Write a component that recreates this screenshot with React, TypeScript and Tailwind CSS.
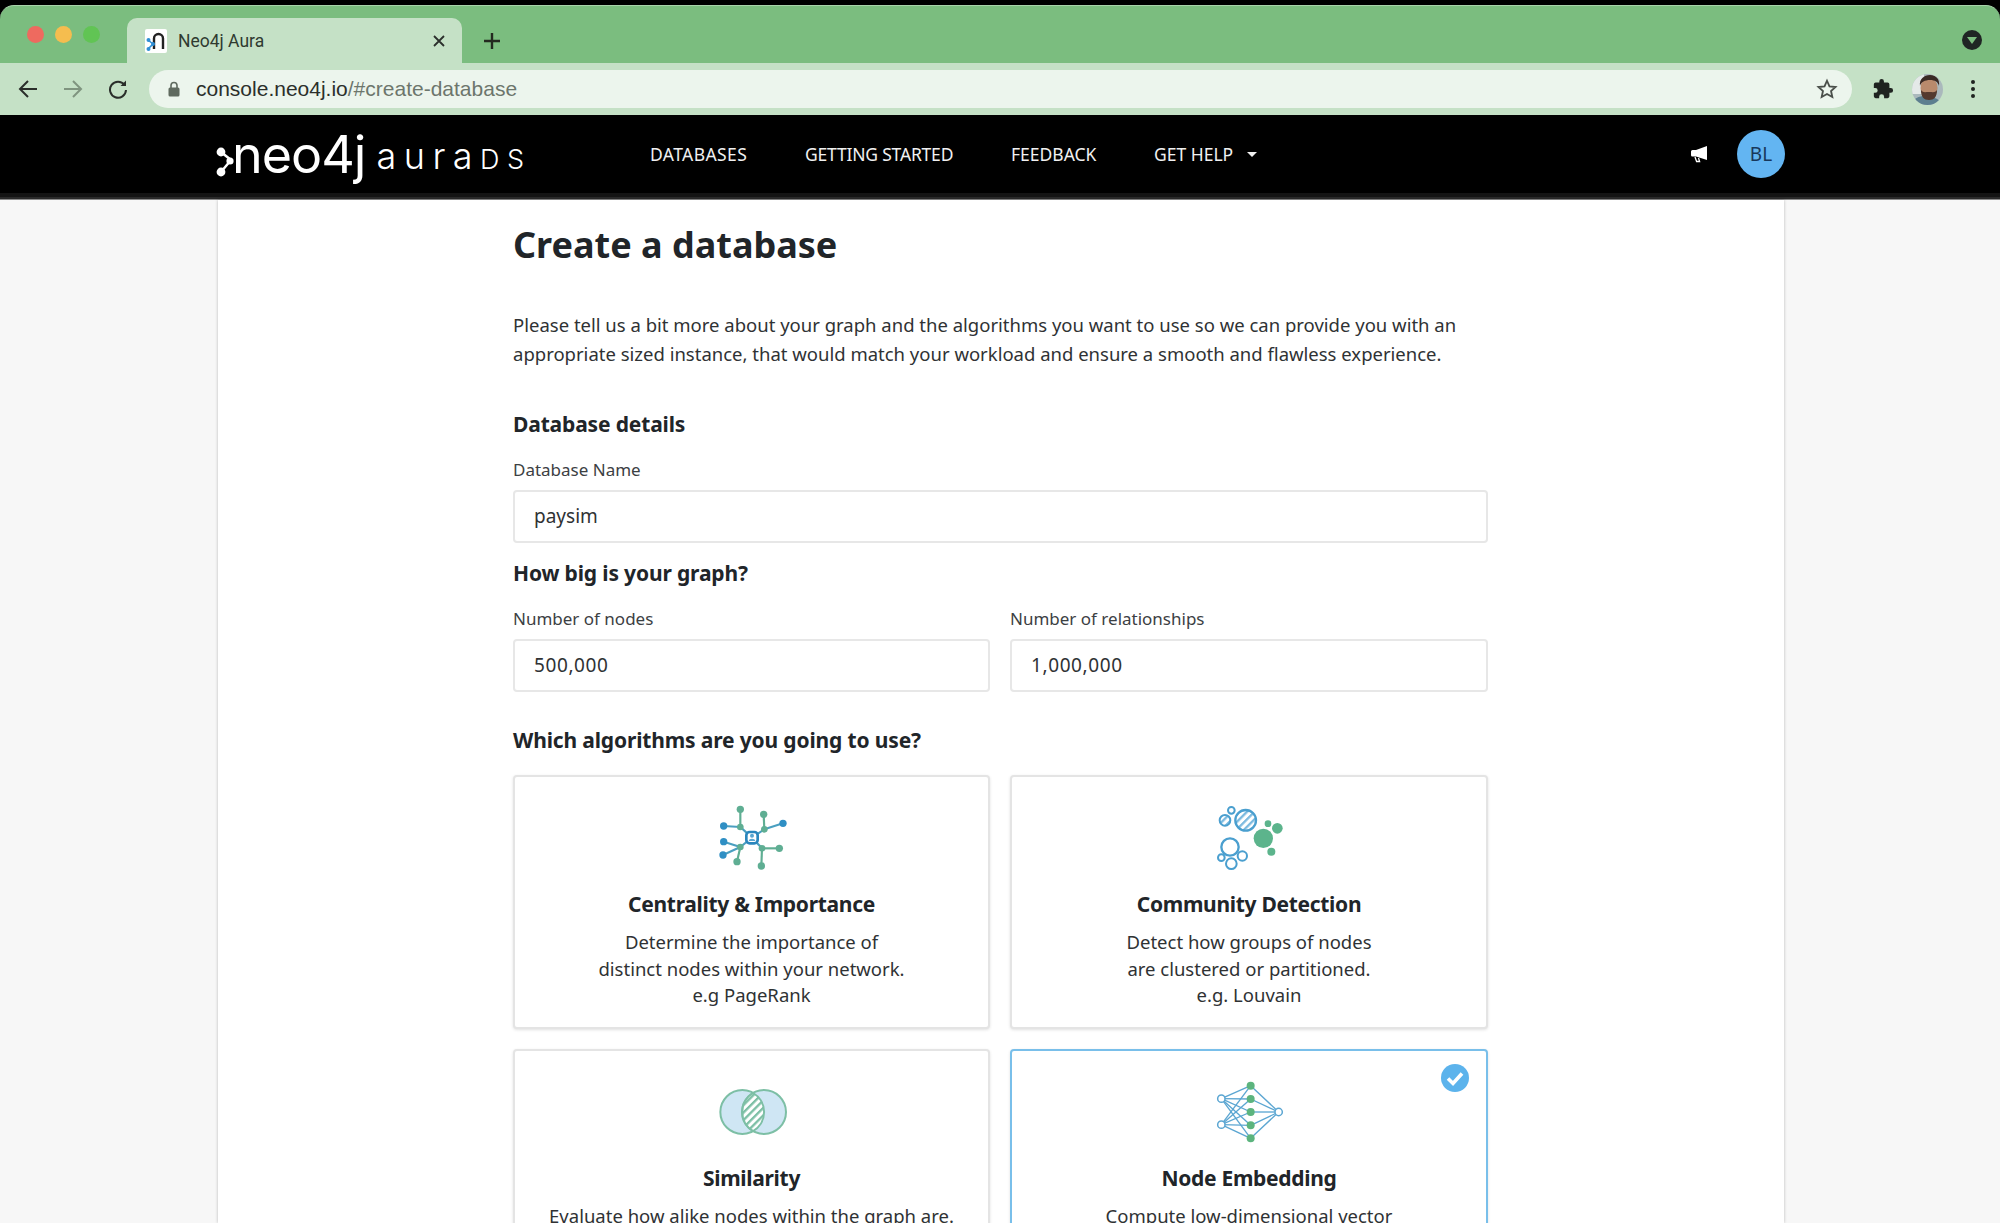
import React from "react";

const sans = "font-['Noto_Sans',sans-serif]";

function Hatch({ id, color, bg = "none" }: { id: string; color: string; bg?: string }) {
  return (
    <pattern id={id} width="16" height="16" patternUnits="userSpaceOnUse" patternTransform="rotate(-45)">
      <rect width="16" height="16" fill={bg} />
      <rect width="16" height="7" fill={color} />
    </pattern>
  );
}

function CentralityIcon() {
  const blue = "#2f8fc4", green = "#5fae93";
  const links: [number, number, number, number, string][] = [
    [185, 140, 150, 108, "#4a9fc0"], [150, 108, 150, 55, green], [150, 108, 100, 105, "#4a9fc0"],
    [185, 140, 222, 115, "#4a9fc0"], [222, 115, 220, 70, green], [222, 115, 278, 97, "#4a9fc0"],
    [185, 140, 150, 168, "#4a9fc0"], [150, 168, 100, 152, "#4a9fc0"], [150, 168, 98, 192, "#4a9fc0"], [150, 168, 140, 212, green],
    [185, 140, 215, 172, "#4a9fc0"], [215, 172, 267, 172, green], [215, 172, 213, 225, green],
  ];
  const nodes: [number, number, number, string][] = [
    [150, 108, 10, green], [222, 115, 10, green], [150, 168, 10, green], [215, 172, 10, green],
    [150, 55, 11, green], [220, 70, 11, green], [140, 212, 11, green], [267, 172, 11, green], [213, 225, 11, green],
    [100, 105, 11, blue], [278, 97, 11, blue], [100, 152, 11, blue], [98, 192, 11, blue],
  ];
  return (
    <svg width="130" height="90" viewBox="-10 6 390 270">
      {links.map(([a, b, c, d, s], i) => <line key={i} x1={a} y1={b} x2={c} y2={d} stroke={s} strokeWidth="6.5" />)}
      {nodes.map(([x, y, r, f], i) => <circle key={i} cx={x} cy={y} r={r} fill={f} />)}
      <rect x="168" y="123" width="34" height="34" rx="10" fill="#fff" stroke="#2a86bd" strokeWidth="8" />
      <circle cx="185" cy="134" r="6" fill="#5aa6d0" />
      <path d="M175 150c1-9 19-9 20 0z" fill="#5aa6d0" />
    </svg>
  );
}

function CommunityIcon() {
  const blue = "#4a9fcf", green = "#5cb48c";
  return (
    <svg width="130" height="90" viewBox="-20 6 390 270">
      <defs><Hatch id="h-comm" color="#7cbadf" /></defs>
      <circle cx="165" cy="88" r="31" fill="url(#h-comm)" stroke={blue} strokeWidth="7" />
      <circle cx="103" cy="88" r="16" fill="url(#h-comm)" stroke={blue} strokeWidth="6" />
      <circle cx="122" cy="58" r="10" fill="#fff" stroke={blue} strokeWidth="6" />
      <circle cx="118" cy="168" r="26" fill="#fff" stroke={blue} strokeWidth="7" />
      <circle cx="92" cy="200" r="10" fill="#fff" stroke={blue} strokeWidth="6" />
      <circle cx="155" cy="195" r="14" fill="#fff" stroke={blue} strokeWidth="6" />
      <circle cx="122" cy="218" r="16" fill="#fff" stroke={blue} strokeWidth="6" />
      <circle cx="218" cy="142" r="29" fill={green} />
      <circle cx="260" cy="112" r="16" fill={green} />
      <circle cx="232" cy="98" r="10" fill={green} />
      <circle cx="242" cy="182" r="12" fill={green} />
    </svg>
  );
}

function SimilarityIcon() {
  const stroke = "#7dbfa5";
  const lens = "M188.5 81A66 66 0 0 1 188.5 195A66 66 0 0 1 188.5 81Z";
  return (
    <svg width="130" height="90" viewBox="-10 3 390 270">
      <defs><Hatch id="h-sim" color="#7dbfa5" bg="#ffffff" /></defs>
      <circle cx="156" cy="138" r="66" fill="#cfe6f4" stroke={stroke} strokeWidth="6" />
      <circle cx="221" cy="138" r="66" fill="#cfe6f4" stroke={stroke} strokeWidth="6" />
      <path d={lens} fill="url(#h-sim)" stroke={stroke} strokeWidth="6" />
    </svg>
  );
}

function EmbeddingIcon() {
  const left: [number, number][] = [[92, 172], [92, 250]];
  const mid: [number, number][] = [[180, 133], [180, 173], [180, 212], [180, 252], [180, 291]];
  const right: [number, number] = [264, 212];
  return (
    <svg width="130" height="90" viewBox="-20 77 390 270">
      {left.flatMap((l, i) => mid.map((m, j) => (
        <line key={`${i}-${j}`} x1={l[0]} y1={l[1]} x2={m[0]} y2={m[1]} stroke="#5ba6d2" strokeWidth="4" />
      )))}
      {mid.map((m, j) => <line key={j} x1={m[0]} y1={m[1]} x2={right[0]} y2={right[1]} stroke="#5ba6d2" strokeWidth="4" />)}
      {mid.map((m, j) => <circle key={j} cx={m[0]} cy={m[1]} r="12" fill="#5cb47e" />)}
      {left.map((l, i) => <circle key={i} cx={l[0]} cy={l[1]} r="11" fill="#fff" stroke="#5ba6d2" strokeWidth="4.5" />)}
      <circle cx={right[0]} cy={right[1]} r="11" fill="#fff" stroke="#5ba6d2" strokeWidth="4.5" />
    </svg>
  );
}

function TrafficLights() {
  return (
    <div className="flex gap-[11px] pl-[27px] pt-[20px] w-[127px] shrink-0">
      <span className="w-[17px] h-[17px] rounded-full bg-[#ee6a5f]" />
      <span className="w-[17px] h-[17px] rounded-full bg-[#f5bd4f]" />
      <span className="w-[17px] h-[17px] rounded-full bg-[#61c454]" />
    </div>
  );
}

function Favicon() {
  return (
    <svg width="22" height="24" viewBox="0 0 22 24" className="shrink-0 bg-white rounded-[2px]">
      <path d="M9 20V9.5a4.5 4.5 0 0 1 9 0V20" fill="none" stroke="#222" strokeWidth="2.4" />
      <path d="M3 11l5 4-5 5" fill="none" stroke="#2f8fd6" strokeWidth="1.6" />
      <circle cx="3.5" cy="11" r="2" fill="#2f8fd6" />
      <circle cx="3.5" cy="20" r="2" fill="#2f8fd6" />
      <circle cx="8" cy="15" r="2" fill="#2f8fd6" />
    </svg>
  );
}

function Tab() {
  return (
    <div className="w-[335px] h-[46px] mt-[12px] shrink-0 bg-[#c5e1c6] rounded-t-[10px] flex items-center pl-[18px] pr-[16px]">
      <Favicon />
      <span className="ml-[11px] text-[17.5px] text-[#2f3a30] font-['Roboto',sans-serif]">Neo4j Aura</span>
      <svg width="14" height="14" viewBox="0 0 14 14" className="ml-auto" fill="none" stroke="#2c2f2c" strokeWidth="1.8">
        <path d="M2 2l10 10M12 2L2 12" />
      </svg>
    </div>
  );
}

function Toolbar() {
  return (
    <div className="h-[52px] bg-[#c5e1c6] flex items-center">
      <div className="w-[149px] shrink-0 flex items-center pl-[18px] gap-[25px]">
        <svg width="20" height="20" viewBox="0 0 20 20" fill="none" stroke="#2a2e2a" strokeWidth="2"><path d="M19 10H2M10 2l-8 8 8 8" /></svg>
        <svg width="20" height="20" viewBox="0 0 20 20" fill="none" stroke="#7f947f" strokeWidth="2"><path d="M1 10h17M10 2l8 8-8 8" /></svg>
        <svg width="20" height="20" viewBox="0 0 20 20" fill="none" stroke="#2a2e2a" strokeWidth="2"><path d="M16.5 6A8 8 0 1 0 18 11" /><path d="M18 1.5V7h-5.5z" fill="#2a2e2a" stroke="none" /></svg>
      </div>
      <div className="w-[1703px] h-[38px] shrink-0 rounded-full bg-[#ecf5ed] flex items-center pl-[19px] pr-[14px]">
        <svg width="12" height="16" viewBox="0 0 12 16" className="shrink-0">
          <path d="M3 7V4.5a3 3 0 0 1 6 0V7" fill="none" stroke="#5f6a5f" strokeWidth="1.6" />
          <rect x="0.5" y="6.5" width="11" height="9" rx="1.5" fill="#5f6a5f" />
        </svg>
        <span className="ml-[16px] text-[21px] text-[#2b2f2b] font-['Liberation_Sans',sans-serif]">
          console.neo4j.io<span className="text-[#6c766c]">/#create-database</span>
        </span>
        <svg width="22" height="22" viewBox="0 0 24 24" className="ml-auto" fill="none" stroke="#4a4f4a" strokeWidth="2" strokeLinejoin="miter">
          <path d="M12 3l2.7 6.1 6.6.7-4.9 4.4 1.4 6.5L12 17.4l-5.8 3.3 1.4-6.5-4.9-4.4 6.6-.7z" />
        </svg>
      </div>
      <svg width="22" height="22" viewBox="0 0 24 24" fill="#1f2320" className="ml-[20px] shrink-0">
        <path d="M20.5 11H19V7a2 2 0 0 0-2-2h-4V3.5a2.5 2.5 0 0 0-5 0V5H4a2 2 0 0 0-2 2v3.8h1.5a2.7 2.7 0 0 1 0 5.4H2V20a2 2 0 0 0 2 2h3.8v-1.5a2.7 2.7 0 0 1 5.4 0V22H17a2 2 0 0 0 2-2v-4h1.5a2.5 2.5 0 0 0 0-5z" />
      </svg>
      <svg width="31" height="31" viewBox="0 0 31 31" className="ml-[18px] shrink-0">
        <defs><clipPath id="av"><circle cx="15.5" cy="15.5" r="15.5" /></clipPath></defs>
        <g clipPath="url(#av)">
          <rect width="31" height="31" fill="#aab8bc" />
          <rect x="0" y="0" width="12" height="20" fill="#e4e9e8" />
          <path d="M0 31c1-7 7-9 13-9s14 2 18 9z" fill="#5d7f8f" />
          <ellipse cx="17" cy="14" rx="8.5" ry="10.5" fill="#b98a6c" />
          <path d="M8 12c-1-7 4-11 10-11s10 4 9 11c-1-4-4-6-9-6s-9 2-10 6z" fill="#3a2a24" />
          <path d="M9 16c2 3 4 2 8 2s6 1 8-2c0 7-3 10-8 10s-8-3-8-10z" fill="#54392e" />
        </g>
      </svg>
      <div className="ml-[28px] flex flex-col gap-[3px] shrink-0">
        <span className="w-[4px] h-[4px] rounded-full bg-[#1f2320]" />
        <span className="w-[4px] h-[4px] rounded-full bg-[#1f2320]" />
        <span className="w-[4px] h-[4px] rounded-full bg-[#1f2320]" />
      </div>
    </div>
  );
}

function Logo() {
  return (
    <div className="w-[434px] shrink-0 flex items-center text-white relative h-[60px]">
      <svg width="18" height="32" viewBox="0 0 18 32" className="mt-[18px] shrink-0">
        <path d="M5 5l10 8-10 12" fill="none" stroke="#fff" strokeWidth="2.5" />
        <circle cx="5" cy="5" r="4.4" fill="#fff" />
        <circle cx="5" cy="25" r="4.4" fill="#fff" />
        <circle cx="14" cy="14" r="3.6" fill="#fff" />
      </svg>
      <span className="font-['Inter',sans-serif] text-[52px] leading-none tracking-[-1px] -ml-[2px] mt-[1px]">neo4j</span>
      <span className="font-['Inter',sans-serif] font-light text-[36px] leading-none tracking-[7.5px] ml-[11px] mt-[4px]">
        aura<span className="text-[27px]">DS</span>
      </span>
    </div>
  );
}

function NavBar() {
  return (
    <div className="h-[85px] bg-black flex flex-col">
      <div className="h-[78px] flex items-center pl-[216px] pr-[215px]">
        <Logo />
        <nav className={`flex items-center text-[17.5px] text-[#f0f0f0] ${sans}`}>
          <span className="w-[155px] tracking-[0.4px]">DATABASES</span>
          <span className="w-[206px] tracking-[-0.2px]">GETTING STARTED</span>
          <span className="w-[143px]">FEEDBACK</span>
          <span className="flex items-center gap-[14px]">
            GET HELP
            <span className="w-0 h-0 border-x-[5px] border-x-transparent border-t-[5px] border-t-[#f0f0f0]" />
          </span>
        </nav>
        <svg width="20" height="18" viewBox="0 0 20 18" className="ml-auto" fill="#fff">
          <path d="M18 1v14L7 11.6H3.5A1.5 1.5 0 0 1 2 10V6.5A1.5 1.5 0 0 1 3.5 5H7z" />
          <path d="M6 12l1.6 4.5h3L9.5 13" fill="none" stroke="#fff" strokeWidth="1.3" />
        </svg>
        <div className={`ml-[28px] w-[48px] h-[48px] rounded-full bg-[#63b5f2] flex items-center justify-center text-[19px] text-[#17375a] ${sans}`}>
          BL
        </div>
      </div>
      <div className="h-[4px] bg-[#141414]" />
      <div className="h-[2px] bg-[#2a2a2a]" />
      <div className="h-[1px] bg-[#8a8a8a]" />
    </div>
  );
}

function Field({ label, value, numeric }: { label: string; value: string; numeric?: boolean }) {
  return (
    <div className="min-w-0">
      <div className="mt-[20px] h-[24px] leading-[24px] text-[17px] text-[#3c4043]">{label}</div>
      <div className={`mt-[8px] h-[53px] rounded-[4px] border-2 border-[#e7e7e7] bg-white flex items-center pl-[19px] text-[19px] text-[#2f3234] ${numeric ? "tracking-[0.6px]" : ""}`}>
        {value}
      </div>
    </div>
  );
}

function Heading({ children, className }: { children: React.ReactNode; className: string }) {
  return <h2 className={`h-[28px] leading-[28px] text-[21px] font-bold text-[#212529] tracking-[-0.15px] ${className}`}>{children}</h2>;
}

function AlgoCard({ icon, title, lines, selected, compact }: { icon: React.ReactNode; title: string; lines: string[]; selected?: boolean; compact?: boolean }) {
  return (
    <div className={`relative min-w-0 h-[254px] rounded-[4px] border-2 bg-white flex flex-col items-center shadow-[0_1px_3px_rgba(0,0,0,0.12)] ${selected ? "border-[#79bfea]" : "border-[#e4e4e4]"}`}>
      <div className="h-[90px] mt-[16px] shrink-0">{icon}</div>
      <div className="mt-[7px] h-[28px] leading-[28px] text-[21px] font-bold text-[#212529] tracking-[-0.3px]">{title}</div>
      <div className={`text-center text-[18.5px] text-[#2f3234] ${compact ? "mt-[16px] leading-[16px]" : "mt-[11px] leading-[26.5px]"}`}>
        {lines.map((l) => <div key={l}>{l}</div>)}
      </div>
      {selected && (
        <svg width="28" height="28" viewBox="0 0 28 28" className="absolute top-[13px] right-[17px]">
          <circle cx="14" cy="14" r="14" fill="#5cb3ec" />
          <path d="M7 14.5l5 5 9-10" fill="none" stroke="#fff" strokeWidth="3.6" />
        </svg>
      )}
    </div>
  );
}

export default function App() {
  return (
    <div className="w-[2000px] h-[1223px] overflow-hidden bg-black flex flex-col">
      <div className="h-[5px] shrink-0 bg-black" />
      <div className="h-[58px] shrink-0 bg-[#7bbd7f] rounded-t-[14px] flex border-t border-[#a9d4ab]">
        <TrafficLights />
        <Tab />
        <svg width="18" height="18" viewBox="0 0 18 18" className="ml-[21px] mt-[26px]" stroke="#23291f" strokeWidth="2.4"><path d="M9 1v16M1 9h16" /></svg>
        <div className="ml-auto mr-[18px] mt-[24px] w-[20px] h-[20px] rounded-full bg-[#1f2524] flex items-center justify-center">
          <span className="w-0 h-0 border-x-[5px] border-x-transparent border-t-[7px] border-t-[#7bbd7f]" />
        </div>
      </div>
      <Toolbar />
      <NavBar />
      <main className={`flex-1 min-h-0 bg-[#f7f7f7] ${sans}`}>
        <div className="ml-[218px] w-[1566px] h-full bg-white shadow-[0_0_3px_rgba(0,0,0,0.25)] pl-[295px]">
          <div className="w-[975px]">
            <h1 className="pt-[23px] h-[67px] leading-[44px] text-[36px] font-bold text-[#212529]">Create a database</h1>
            <p className="mt-[43px] text-[18.5px] leading-[29px] text-[#2f3234]">
              Please tell us a bit more about your graph and the algorithms you want to use so we can provide you with an
              <br />
              appropriate sized instance, that would match your workload and ensure a smooth and flawless experience.
            </p>
            <Heading className="mt-[42px]">Database details</Heading>
            <Field label="Database Name" value="paysim" />
            <Heading className="mt-[16px]">How big is your graph?</Heading>
            <div className="grid grid-cols-[477px_478px] gap-x-[20px]">
              <Field label="Number of nodes" value="500,000" numeric />
              <Field label="Number of relationships" value="1,000,000" numeric />
            </div>
            <Heading className="mt-[34px]">Which algorithms are you going to use?</Heading>
            <div className="mt-[21px] grid grid-cols-[477px_478px] gap-x-[20px] gap-y-[20px]">
              <AlgoCard icon={<CentralityIcon />} title="Centrality & Importance" lines={["Determine the importance of", "distinct nodes within your network.", "e.g PageRank"]} />
              <AlgoCard icon={<CommunityIcon />} title="Community Detection" lines={["Detect how groups of nodes", "are clustered or partitioned.", "e.g. Louvain"]} />
              <AlgoCard compact icon={<SimilarityIcon />} title="Similarity" lines={["Evaluate how alike nodes within the graph are."]} />
              <AlgoCard compact selected icon={<EmbeddingIcon />} title="Node Embedding" lines={["Compute low-dimensional vector"]} />
            </div>
          </div>
        </div>
      </main>
    </div>
  );
}
